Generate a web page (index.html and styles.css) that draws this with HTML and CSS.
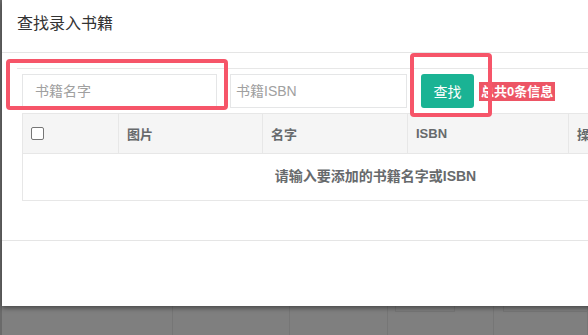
FILE: index.html
```html
<!DOCTYPE html>
<html lang="zh-CN">
<head>
    <meta charset="UTF-8">
    <title>查找录入书籍</title>
    <link rel="stylesheet" href="styles.css">
</head>
<body>
    <div class="page">
        <div class="page-col col-a"></div>
        <div class="page-col col-b"></div>
        <div class="page-col col-c"></div>
        <div class="page-col col-d"><div class="page-box"></div></div>
        <div class="page-col col-e"><div class="page-box"></div></div>
    </div>

    <div class="modal">
        <div class="modal-header">
            <h4 class="modal-title">查找录入书籍</h4>
        </div>
        <div class="modal-body">
            <div class="search-panel">
                <form class="search-form">
                    <input type="text" class="form-control name-input" placeholder="书籍名字">
                    <input type="text" class="form-control isbn-input" placeholder="书籍ISBN">
                    <button type="button" class="btn btn-primary">查找</button>
                    <span class="label label-danger">总共0条信息</span>
                </form>

                <table class="book-table">
                    <thead>
                        <tr>
                            <th class="col-check"><span class="checkbox"></span></th>
                            <th class="col-pic">图片</th>
                            <th class="col-name">名字</th>
                            <th class="col-isbn">ISBN</th>
                            <th class="col-op">操作</th>
                        </tr>
                    </thead>
                    <tbody>
                        <tr>
                            <td colspan="5" class="empty">请输入要添加的书籍名字或ISBN</td>
                        </tr>
                    </tbody>
                </table>
            </div>
        </div>
        <div class="modal-footer"></div>

        <!-- annotation marks drawn over the dialog -->
        <div class="mark mark-name"></div>
        <div class="mark mark-search"></div>
    </div>
</body>
</html>
```

FILE: styles.css
```css
* {
    margin: 0;
    padding: 0;
    box-sizing: border-box;
}

body {
    font-family: "Liberation Sans", "Noto Sans CJK SC", sans-serif;
    background: #7f7f7f;
    width: 588px;
    height: 335px;
    overflow: hidden;
    color: #676a6c;
}

/* page behind the backdrop */
.page {
    display: flex;
    height: 335px;
    padding-left: 2px;
    border-left: 2px solid #6a6a6a;
}

.page-col {
    flex-shrink: 0;
    border-right: 1px solid #767676;
    height: 100%;
}

.col-a { width: 169px; }
.col-b { width: 117px; }
.col-c { width: 98px; }
.col-d { width: 106px; padding-left: 7px; }
.col-e { flex: 1 0 0; min-width: 0; padding-left: 9px; }

.page-box {
    height: 312px;
    width: 60px;
    border: 1px solid #767676;
    border-top: none;
}

.col-e .page-box {
    width: 200px;
}

/* dialog */
.modal {
    position: absolute;
    top: 0;
    left: 2px;
    width: 760px;
    height: 306px;
    background: #fff;
    box-shadow: 0 2px 5px rgba(0, 0, 0, 0.45);
}

.modal-header {
    height: 53px;
    padding: 14px 15px 0;
    border-bottom: 1px solid #e5e5e5;
}

.modal-title {
    font-size: 16px;
    line-height: 20px;
    font-weight: normal;
    color: #333;
}

.modal-body {
    padding: 15px 15px 0;
    height: 188px;
    border-bottom: 1px solid #e5e5e5;
}

.search-panel {
    border-top: 1px solid #e7e7e7;
    padding: 5px;
}

.search-form {
    display: flex;
    align-items: center;
    height: 34px;
    margin-bottom: 5px;
}

.form-control {
    height: 34px;
    padding: 6px 12px;
    border: 1px solid #e5e6e7;
    font-family: "Liberation Sans", "Noto Sans CJK SC", sans-serif;
    font-size: 14px;
    color: #555;
    outline: none;
}

.form-control::placeholder {
    color: #a0a0a0;
}

.name-input {
    width: 195px;
    margin-right: 13px;
}

.isbn-input {
    width: 177px;
    padding-left: 5px;
    margin-right: 14px;
}

.btn {
    height: 34px;
    width: 53px;
    border: none;
    border-radius: 3px;
    font-family: "Liberation Sans", "Noto Sans CJK SC", sans-serif;
    font-size: 14px;
    cursor: pointer;
}

.btn-primary {
    background: #1ab394;
    color: #fff;
}

.label {
    display: inline-block;
    margin-left: 5px;
    padding: 0 2px;
    height: 19px;
    line-height: 19px;
    font-size: 13px;
    font-weight: bold;
    color: #fff;
}

.label-danger {
    background: #ed5565;
}

/* result table */
.book-table {
    width: 707px;
    border-collapse: collapse;
    border: 1px solid #e7e7e7;
    font-size: 13px;
}

.book-table th {
    height: 40px;
    padding: 0 8px;
    text-align: left;
    background: #f5f5f5;
    border: 1px solid #e7e7e7;
    font-weight: bold;
    color: #676a6c;
}

.col-check { width: 96px; }
.col-pic { width: 144px; }
.col-name { width: 145px; }
.col-isbn { width: 161px; }

.checkbox {
    display: block;
    width: 13px;
    height: 13px;
    border: 1px solid #767676;
    border-radius: 2px;
    background: #fff;
}

.book-table td.empty {
    height: 47px;
    padding-bottom: 4px;
    text-align: center;
    font-size: 14px;
    font-weight: bold;
    color: #676a6c;
}

.modal-footer {
    height: 64px;
}

/* red highlight marks */
.mark {
    position: absolute;
    border: 4px solid #f65569;
    border-radius: 4px;
}

.mark-name {
    left: 4px;
    top: 59px;
    width: 222px;
    height: 51px;
}

.mark-search {
    left: 408px;
    top: 53px;
    width: 82px;
    height: 64px;
}
```
